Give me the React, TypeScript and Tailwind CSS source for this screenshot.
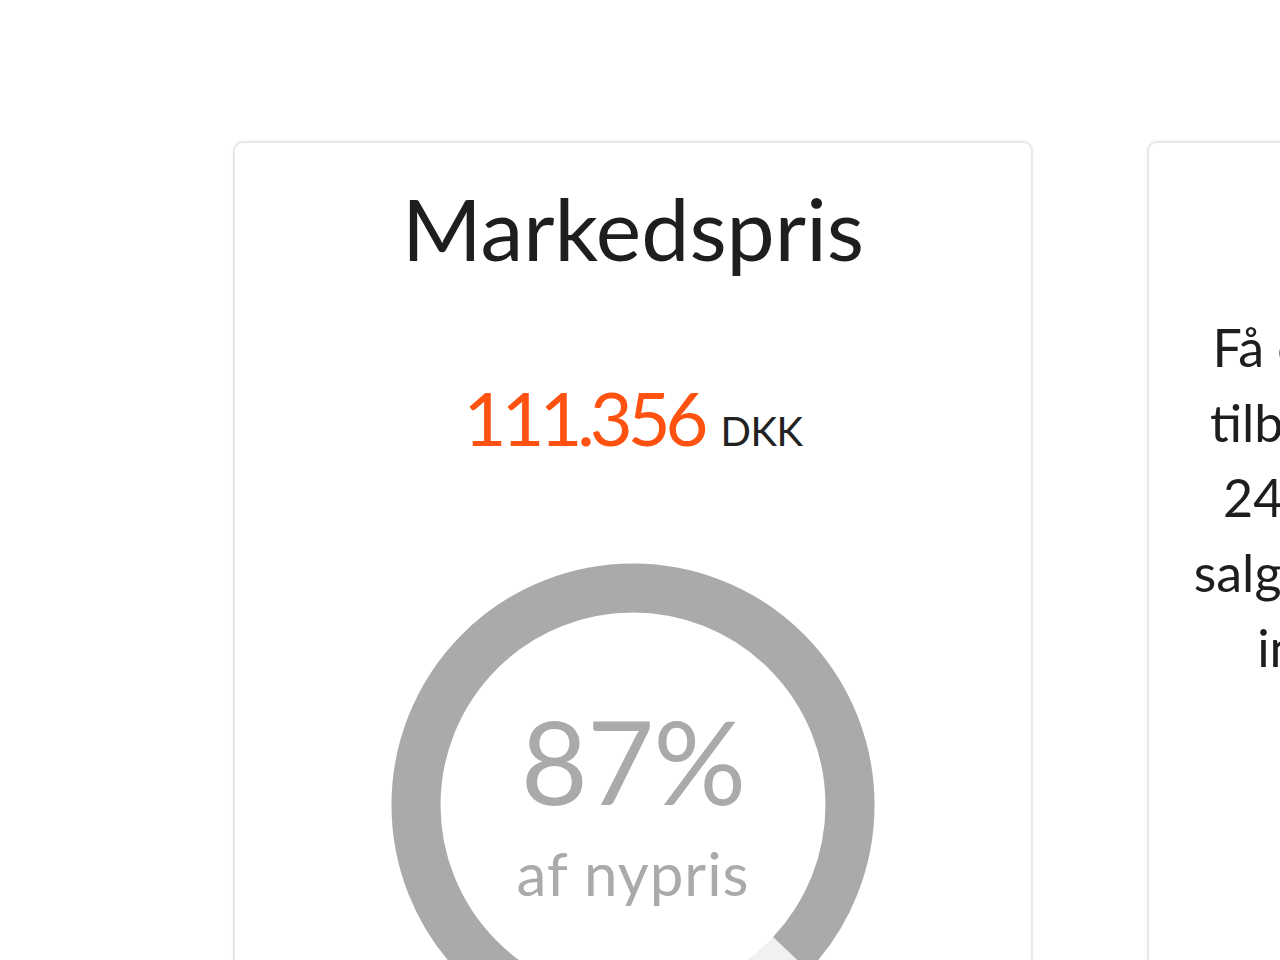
import React from "react";

const font = { fontFamily: "Lato, 'Noto Sans', sans-serif" };

function Gauge({ percent }: { percent: number }) {
  const r = 217;
  const c = 2 * Math.PI * r;
  const filled = (percent / 100) * c;
  return (
    <div className="relative w-[484px] h-[484px]">
      <svg width="484" height="484" viewBox="0 0 484 484" className="absolute inset-0">
        <circle cx="242" cy="242" r={r} fill="none" stroke="#f1f1f0" strokeWidth="49" />
        <circle
          cx="242"
          cy="242"
          r={r}
          fill="none"
          stroke="#aaaaaa"
          strokeWidth="49"
          strokeDasharray={`${filled} ${c}`}
          transform="rotate(90 242 242)"
        />
      </svg>
      <div className="absolute inset-0 flex flex-col items-center text-[#aaaaaa]">
        <div className="mt-[140px] text-[116px] leading-none tracking-[-1px]">{percent}%</div>
        <div className="mt-[24px] text-[60px] leading-none tracking-[1px]">af nypris</div>
      </div>
    </div>
  );
}

export default function App() {
  return (
    <div className="w-[1280px] h-[960px] overflow-hidden bg-white" style={font}>
      <div className="flex gap-[114px] pl-[233px] pt-[141px]">
        <div className="w-[800px] h-[1000px] shrink-0 rounded-[10px] border-2 border-[#e9e9e8] shadow-[0_0_3px_rgba(0,0,0,0.06)] flex flex-col items-center">
          <h1 className="mt-[42px] text-[86px] leading-none text-[#1e1e1e] font-normal">Markedspris</h1>
          <div className="mt-[110px] flex items-baseline gap-[17px]">
            <span className="text-[74px] leading-none tracking-[-5px] text-[#ff5211]">111.356</span>
            <span className="text-[40px] leading-none tracking-[-0.5px] text-[#222222]">DKK</span>
          </div>
          <div className="mt-[108px]">
            <Gauge percent={87} />
          </div>
        </div>
        <div className="w-[800px] h-[1000px] shrink-0 rounded-[10px] border-2 border-[#e9e9e8] shadow-[0_0_3px_rgba(0,0,0,0.06)] flex flex-col items-center">
          <p className="mt-[167px] text-center text-[52px] leading-[75px] text-[#1e1e1e] whitespace-nowrap">
            Få et hurtigt og uforpligtende
            <br />
            tilbud fra vores bilforhandlere
            <br />
            24 timer fra din forespørgsel
            <br />
            salgskonsulenter vurderer bilen
            <br />
            indenfor kort tid og gratis
          </p>
        </div>
      </div>
    </div>
  );
}
